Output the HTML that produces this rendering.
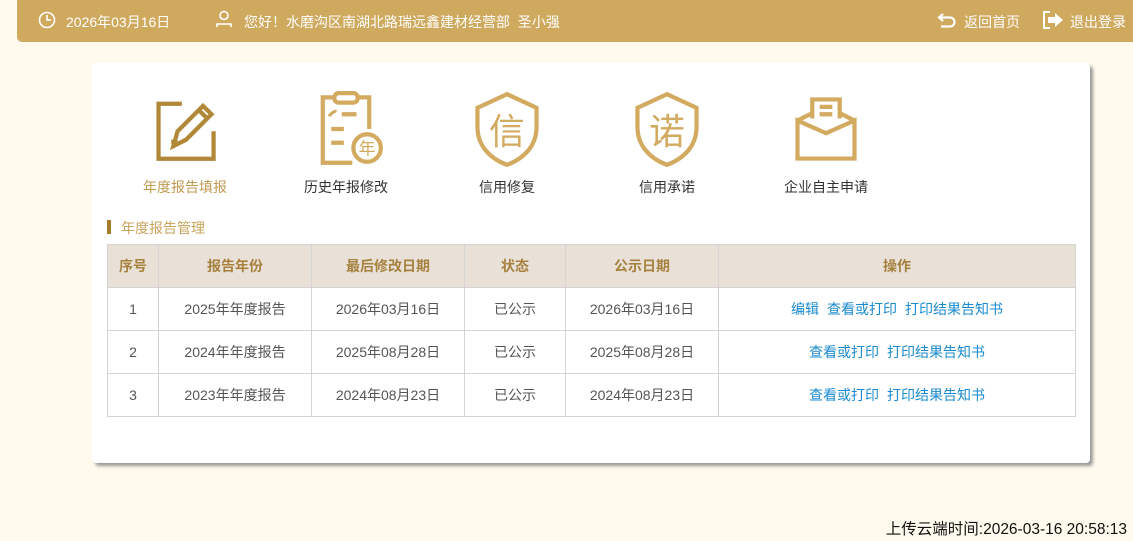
<!DOCTYPE html>
<html><head><meta charset="utf-8"><style>
*{margin:0;padding:0;box-sizing:border-box}
body{width:1133px;height:541px;background:#fffaed;font-family:"Liberation Sans","Noto Sans CJK SC",sans-serif;position:relative;overflow:hidden;font-size:14px}
.hdr{position:absolute;left:17px;top:0;width:1116px;height:42px;background:#cfa95e;border-bottom-left-radius:5px;color:#fff;font-size:14px}
.hdr span{position:absolute;top:12px;white-space:nowrap}
.card{position:absolute;left:92px;top:63px;width:998px;height:400px;background:#fff;border-radius:4px;box-shadow:3px 3px 3px #999}
.ic{position:absolute;top:28px;width:120px;text-align:center}
.ic svg{display:block;margin:0 auto}
.ic div{position:absolute;top:86px;left:0;width:120px;font-size:14px;color:#333}
.sec{position:absolute;left:15px;top:155px;font-size:14px;color:#c9a35c;padding-left:14px}
.sec:before{content:"";position:absolute;left:0;top:2px;width:4px;height:14px;background:#a77b2c}
table{position:absolute;left:15px;top:181px;width:969px;border-collapse:collapse;font-size:14px}
td,th{border:1px solid #d4d4d4;text-align:center;height:43px;color:#555;font-weight:normal}
th{background:#e9e1d8;color:#a6813e;font-weight:bold}
a{color:#1a8bd0;margin:0 4px}
.ft{position:absolute;right:6px;top:517px;font-size:15.5px;color:#111}
</style></head><body>
<div class="hdr">
<svg style="position:absolute;left:21px;top:11px" width="18" height="18" viewBox="0 0 18 18" fill="none" stroke="#fff" stroke-width="1.6"><circle cx="9" cy="9" r="7.5"/><path d="M9 4v5h4"/></svg>
<span style="left:49px">2026年03月16日</span>
<svg style="position:absolute;left:198px;top:10px" width="18" height="18" viewBox="0 0 18 18" fill="none" stroke="#fff" stroke-width="1.6"><circle cx="9" cy="5.5" r="4"/><path d="M2 17v-3h14v3"/></svg>
<span style="left:227px">您好！水磨沟区南湖北路瑞远鑫建材经营部&nbsp;&nbsp;圣小强</span>
<svg style="position:absolute;left:920px;top:11px" width="20" height="18" viewBox="0 0 20 18" fill="none" stroke="#fff" stroke-width="2.2"><path d="M6 3L2 6.5 6 10"/><path d="M2 6.5h11a4.5 4.5 0 010 9H4"/></svg>
<span style="left:947px">返回首页</span>
<svg style="position:absolute;left:1025px;top:10px" width="22" height="20" viewBox="0 0 22 20"><path d="M8 2H2v16h6" fill="none" stroke="#fff" stroke-width="2"/><path d="M6 7h7V3l8 7-8 7v-4H6z" fill="#fff"/></svg>
<span style="left:1053px">退出登录</span>
</div>
<div class="card">
<div class="ic" style="left:33px"><svg width="70" height="72" viewBox="0 0 66 68" fill="none" stroke="#b08838" stroke-width="4"><path d="M30 12H8v52h52V38"/><path d="M22 52l4-14 24-24 8 8-24 24z"/><path d="M46 18l8 8"/><path d="M20 48h6"/></svg><div style="color:#c19a50">年度报告填报</div></div>
<div class="ic" style="left:194px"><svg width="76" height="76" viewBox="0 0 72 72" fill="none" stroke="#d2ab60" stroke-width="4"><rect x="25" y="2" width="22" height="9" rx="4"/><path d="M25 6H14v62h28M47 6h11v30"/><path d="M32 22h14M22 36h12M22 49h12"/><circle cx="56" cy="54" r="13"/><text x="56" y="60" font-size="16" fill="#d2ab60" stroke="none" text-anchor="middle" font-family="Noto Sans CJK SC">年</text><path d="M20 24c2-4 6-4 6-6" stroke-width="3"/></svg><div>历史年报修改</div></div>
<div class="ic" style="left:355px"><svg width="72" height="76" viewBox="0 0 66 72" fill="none" stroke="#d2ab60" stroke-width="4"><path d="M33 3L5 16v18c0 18 12 30 28 36 16-6 28-18 28-36V16z"/><text x="33" y="50" font-size="34" fill="#d2ab60" stroke="none" text-anchor="middle" font-family="Noto Sans CJK SC">信</text></svg><div>信用修复</div></div>
<div class="ic" style="left:515px"><svg width="72" height="76" viewBox="0 0 66 72" fill="none" stroke="#d2ab60" stroke-width="4"><path d="M33 3L5 16v18c0 18 12 30 28 36 16-6 28-18 28-36V16z"/><text x="33" y="50" font-size="34" fill="#d2ab60" stroke="none" text-anchor="middle" font-family="Noto Sans CJK SC">诺</text></svg><div>信用承诺</div></div>
<div class="ic" style="left:674px"><svg width="70" height="76" viewBox="0 0 66 72" fill="none" stroke="#d2ab60" stroke-width="4"><path d="M20 26V8h26v18"/><path d="M27 15h12M27 22h12"/><path d="M6 28l14-7M60 28l-14-7"/><path d="M6 28v36h54V28L33 40z"/></svg><div>企业自主申请</div></div>
<div class="sec">年度报告管理</div>
<table>
<tr><th style="width:51px">序号</th><th style="width:153px">报告年份</th><th style="width:153px">最后修改日期</th><th style="width:101px">状态</th><th style="width:153px">公示日期</th><th>操作</th></tr>
<tr><td>1</td><td>2025年年度报告</td><td>2026年03月16日</td><td>已公示</td><td>2026年03月16日</td><td><a>编辑</a><a>查看或打印</a><a>打印结果告知书</a></td></tr>
<tr><td>2</td><td>2024年年度报告</td><td>2025年08月28日</td><td>已公示</td><td>2025年08月28日</td><td><a>查看或打印</a><a>打印结果告知书</a></td></tr>
<tr><td>3</td><td>2023年年度报告</td><td>2024年08月23日</td><td>已公示</td><td>2024年08月23日</td><td><a>查看或打印</a><a>打印结果告知书</a></td></tr>
</table>
</div>
<div class="ft">上传云端时间:2026-03-16 20:58:13</div>
</body></html>
